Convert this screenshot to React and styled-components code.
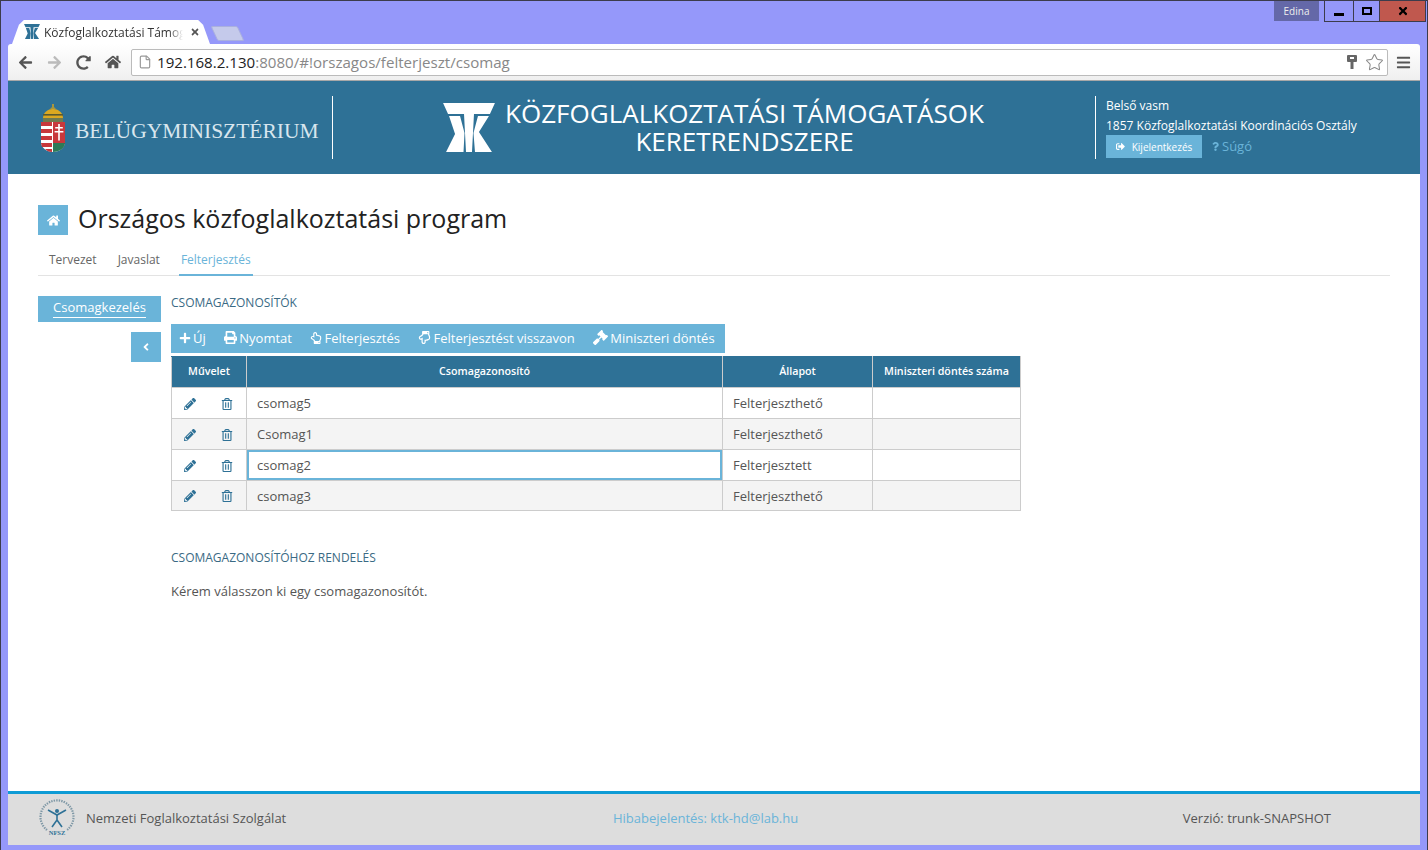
import React from 'react';
import styled, { createGlobalStyle } from 'styled-components';
import {
  FaArrowLeft, FaArrowRight, FaBars, FaGavel, FaHome, FaPencilAlt, FaPlus, FaPrint, FaQuestion,
  FaRedoAlt, FaRegHandPointDown, FaRegHandPointUp, FaRegTrashAlt, FaSignOutAlt, FaAngleLeft, FaTimes,
} from 'react-icons/fa';
import { File, Star } from 'lucide-react';

const GlobalStyle = createGlobalStyle`
  html, body { margin: 0; padding: 0; }
  body { font-family: "Open Sans", "Noto Sans", sans-serif; color: #555; overflow: hidden; }
  * { box-sizing: border-box; }
`;

const TkLogo = ({ size = 50, color = '#fff' }) => (
  <svg width={size} height={size * 0.94} viewBox="0 0 52 49" fill={color}>
    <polygon points="0,0 52,0 47,11 31,11 29,49 23,49 21,11 5,11" />
    <polygon points="6,13 17,13 21.5,30 20.5,49 3,49 12,31" />
    <polygon points="35,13 46,13 36,29 49,49 32,49 30.5,30" />
  </svg>
);

const CoatOfArms = () => (
  <svg width="24" height="48" viewBox="0 0 24 48">
    <path d="M11 0 L13 0 L13 3 L15 5 L12 6 L9 5 L11 3 Z" fill="#a8963c" />
    <path d="M2 17 C1 8 7 5 12 5 C17 5 23 8 22 17 Z" fill="#dba820" />
    <rect x="2" y="10" width="20" height="1.6" fill="#5a5a30" />
    <rect x="2" y="14" width="20" height="4" fill="#6f7a50" />
    <path d="M0 18 H24 V38 C24 44 18 48 12 48 C6 48 0 44 0 38 Z" fill="#fff" />
    <path d="M0 18 H11 V22 H0 Z M0 25 H11 V29 H0 Z M0 32 H11 V36 H0 Z M0 39 H11 V43 H1 Z M4 45 H11 V48 C8 48 6 47 4 45 Z" fill="#c8383c" />
    <path d="M12 18 H24 V40 H12 Z" fill="#c8383c" />
    <path d="M17.2 20 h1.6 v3 h3 v1.5 h-3 v2.5 h3.6 v1.5 h-3.6 v8 h-1.6 v-8 h-3.6 v-1.5 h3.6 v-2.5 h-3 v-1.5 h3 Z" fill="#fff" />
    <path d="M12 39 H24 C24 44 18 48 12 48 Z" fill="#2d7a57" />
  </svg>
);

const NfszLogo = () => (
  <svg width="38" height="38" viewBox="0 0 38 38">
    <path d="M9 31 A16.5 16.5 0 1 1 29 31" fill="none" stroke="#7f98a6" strokeWidth="2.2" strokeDasharray="1.4 1.1" />
    <g stroke="#2e7196" fill="none" strokeWidth="1.6">
      <path d="M10 11 L19 16 L28 11" />
      <path d="M19 15 V21 L14 28 M19 21 L24 28" />
    </g>
    <circle cx="19" cy="12" r="2" fill="#2e7196" />
    <text x="19" y="36" textAnchor="middle" fontSize="6.5" fontWeight="700" fontFamily='"Liberation Serif", serif' fill="#2e7196">NFSZ</text>
  </svg>
);

const KeyIcon = () => (
  <svg width="10" height="15" viewBox="0 0 10 15" fill="#666">
    <rect x="0" y="0" width="10" height="7" rx="1" />
    <rect x="3.5" y="6" width="3" height="8" />
    <rect x="3" y="2" width="4" height="2" fill="#fff" />
  </svg>
);

const Window = styled.div`
  width: 1428px;
  height: 850px;
  display: flex;
  flex-direction: column;
  background: #9598fa;
  border-top: 1px solid #3c3c4c;
  border-left: 1px solid #3c3c4c;
  border-right: 1px solid #3c3c4c;
  padding: 0 7px 5px;
`;

const TitleBar = styled.div`
  height: 43px;
  flex: none;
  display: flex;
  align-items: flex-end;
  padding-left: 4px;
  position: relative;
`;

const ActiveTab = styled.div`
  width: 198px;
  height: 24px;
  flex: none;
  background: #fff;
  display: flex;
  align-items: center;
  padding: 0 6px 0 12px;
  gap: 4px;
  clip-path: polygon(0 100%, 3.5% 20%, 6% 0, 94% 0, 96.5% 20%, 100% 100%);
`;

const TabTitle = styled.span`
  font-size: 12px;
  color: #333;
  white-space: nowrap;
  overflow: hidden;
  width: 139px;
  flex: none;
  -webkit-mask-image: linear-gradient(to right, #000 90%, transparent);
  mask-image: linear-gradient(to right, #000 90%, transparent);
`;

const TabClose = styled.span`
  display: flex;
  color: #555;
  font-size: 10px;
  margin-left: 3px;
`;

const NewTab = styled.div`
  width: 27px;
  height: 15px;
  margin: 0 0 3px 4px;
  background: #c5caeb;
  border: 1px solid #aab0de;
  border-radius: 2px;
  transform: skewX(25deg);
`;

const WindowControls = styled.div`
  position: absolute;
  top: 0;
  right: -6px;
  display: flex;
  align-items: flex-start;
  gap: 5px;
`;

const UserBadge = styled.div`
  width: 45px;
  height: 20px;
  background: #6468a8;
  color: #eee;
  font-size: 10px;
  line-height: 20px;
  text-align: center;
`;

const ControlGroup = styled.div`
  display: flex;
  height: 21px;
  border: 1px solid #3c3c4c;
  border-top: 0;
`;

const ControlButton = styled.div`
  width: ${(p) => p.$width}px;
  display: flex;
  align-items: center;
  justify-content: center;
  color: #000;
  background: ${(p) => (p.$close ? '#c0584e' : 'transparent')};
  border-left: ${(p) => (p.$first ? '0' : '1px solid #3c3c4c')};
`;

const MinGlyph = styled.span`
  width: 10px;
  height: 3px;
  background: #000;
  margin-top: 6px;
`;

const MaxGlyph = styled.span`
  width: 10px;
  height: 8px;
  border: 2px solid #000;
`;

const Toolbar = styled.div`
  height: 37px;
  flex: none;
  background: linear-gradient(#fff, #efefef);
  border-radius: 3px 3px 0 0;
  border-bottom: 1px solid #a8a8a8;
  display: flex;
  align-items: center;
  padding: 0 8px 0 10px;
`;

const NavButton = styled.span`
  width: ${(p) => p.$width || 29}px;
  display: flex;
  color: ${(p) => p.$color || '#555'};
  font-size: 15px;
`;

const UrlBar = styled.div`
  width: 1257px;
  height: 27px;
  border: 1px solid #bbb;
  border-radius: 2px;
  background: #fff;
  display: flex;
  align-items: center;
  padding: 0 3px 0 6px;
`;

const UrlText = styled.span`
  margin-left: 5px;
  font-size: 15.1px;
  color: #888;
  flex: 1;
  white-space: nowrap;
`;

const UrlHost = styled.span`
  color: #222;
`;

const UrlIcons = styled.span`
  display: flex;
  align-items: center;
  gap: 8px;
`;

const MenuButton = styled.span`
  display: flex;
  margin-left: 8px;
  color: #555;
  font-size: 15px;
`;

const Page = styled.div`
  flex: 1;
  display: flex;
  flex-direction: column;
  background: #fff;
`;

const Header = styled.header`
  height: 93px;
  flex: none;
  background: #2e7196;
  display: flex;
  align-items: center;
  color: #fff;
`;

const Ministry = styled.div`
  width: 325px;
  height: 63px;
  flex: none;
  display: flex;
  align-items: center;
  gap: 10px;
  padding-left: 33px;
  border-right: 1px solid #fff;
`;

const MinistryName = styled.span`
  font-family: "Liberation Serif", serif;
  font-size: 21.5px;
  color: #d8e6ee;
  white-space: nowrap;
  padding-top: 8px;
`;

const Brand = styled.div`
  flex: 1;
  display: flex;
  align-items: center;
  justify-content: center;
  gap: 10px;
  padding-right: 1px;
`;

const BrandTitle = styled.div`
  font-size: 26px;
  line-height: 28px;
  text-align: center;
  white-space: nowrap;
  margin-top: -2px;
`;

const UserBox = styled.div`
  width: 325px;
  height: 63px;
  flex: none;
  border-left: 1px solid #fff;
  padding-left: 10px;
  font-size: 12px;
  display: flex;
  flex-direction: column;
`;

const UserLine = styled.div`
  height: 20px;
  line-height: 19px;
  white-space: nowrap;
`;

const UserActions = styled.div`
  display: flex;
  align-items: center;
  gap: 9px;
  margin-top: -1px;
`;

const LogoutButton = styled.span`
  width: 96px;
  height: 23px;
  background: #6ab4d9;
  display: flex;
  align-items: center;
  justify-content: center;
  gap: 7px;
  font-size: 10px;
`;

const HelpLink = styled.span`
  display: flex;
  align-items: center;
  gap: 2px;
  font-size: 13px;
  color: #6ab4d9;
  margin-top: -1px;
`;

const Content = styled.main`
  flex: 1;
  padding: 31px 30px 0;
`;

const TitleRow = styled.div`
  display: flex;
  align-items: center;
  gap: 10px;
`;

const TitleIcon = styled.span`
  width: 30px;
  height: 30px;
  background: #6ab4d9;
  color: #fff;
  font-size: 13px;
  display: flex;
  align-items: center;
  justify-content: center;
`;

const PageTitle = styled.h1`
  margin: 0;
  font-size: 25px;
  font-weight: 400;
  line-height: 26px;
  padding-bottom: 4px;
  color: #222;
`;

const Tabs = styled.nav`
  margin-top: 10px;
  height: 31px;
  border-bottom: 1px solid #e3e3e3;
  display: flex;
  gap: 17px;
  padding-left: 9px;
`;

const TabLink = styled.span`
  height: 31px;
  font-size: 12px;
  line-height: 29px;
  padding: 0 2px;
  color: ${(p) => (p.$active ? '#6ab4d9' : '#666')};
  border-bottom: ${(p) => (p.$active ? '2px solid #6ab4d9' : '0')};
`;

const Body = styled.div`
  margin-top: 20px;
  display: flex;
  gap: 10px;
`;

const Side = styled.aside`
  width: 123px;
  flex: none;
  display: flex;
  flex-direction: column;
  align-items: flex-end;
  gap: 10px;
`;

const SideItem = styled.div`
  width: 100%;
  height: 26px;
  background: #6ab4d9;
  color: #fff;
  font-size: 13px;
  line-height: 22px;
  text-align: center;
`;

const SideLabel = styled.span`
  border-bottom: 1px solid #fff;
  padding-bottom: 1px;
`;

const CollapseButton = styled.span`
  width: 30px;
  height: 30px;
  background: #6ab4d9;
  color: #fff;
  font-size: 12px;
  display: flex;
  align-items: center;
  justify-content: center;
`;

const Main = styled.section`
  flex: 1;
`;

const SectionTitle = styled.h2`
  margin: 0;
  font-size: 12px;
  font-weight: 400;
  line-height: 14px;
  color: #3a6a84;
  text-transform: uppercase;
`;

const ActionBar = styled.div`
  margin-top: 14px;
  width: 554px;
  height: 29px;
  background: #6ab4d9;
  display: flex;
  align-items: center;
  padding: 0 0 2px 8px;
  gap: 18.5px;
  color: #fff;
  font-size: 13px;
`;

const ActionItem = styled.span`
  display: flex;
  align-items: center;
  gap: 2px;
  white-space: nowrap;
`;

const Table = styled.table`
  margin-top: 3px;
  width: 849px;
  table-layout: fixed;
  border-collapse: collapse;
  font-size: 13px;
`;

const HeadCell = styled.th`
  height: 31px;
  padding: 0 0 3px;
  background: #2e7196;
  border: 1px solid #ccc;
  border-top-color: #2e7196;
  color: #fff;
  font-size: 10.7px;
  font-weight: 600;
`;

const Row = styled.tr`
  background: ${(p) => (p.$odd ? '#f4f4f4' : '#fff')};
`;

const Cell = styled.td`
  height: ${(p) => (p.$last ? 30 : 31)}px;
  padding: 0 10px;
  border: 1px solid #ccc;
  color: #555;
  box-shadow: ${(p) => (p.$selected ? 'inset 0 0 0 2px #6ab4d9' : 'none')};
`;

const ActionCell = styled.div`
  display: flex;
  align-items: center;
  justify-content: space-between;
  padding: 1px 3px 0 2px;
  color: #2e7196;
  font-size: 12px;
`;

const AssignSection = styled.div`
  margin-top: 40px;
`;

const Hint = styled.p`
  margin: 18px 0 0;
  font-size: 13px;
  line-height: 17px;
  color: #555;
`;

const Footer = styled.footer`
  height: 54px;
  flex: none;
  background: #ddd;
  border-top: 3px solid #0e9bd5;
  display: flex;
  align-items: center;
  padding: 0 89px 4px 30px;
  font-size: 13px;
  color: #555;
`;

const FooterLeft = styled.div`
  width: 575px;
  display: flex;
  align-items: center;
  gap: 10px;
`;

const FooterLink = styled.span`
  color: #6ab4d9;
`;

const FooterRight = styled.span`
  margin-left: auto;
`;

const rows = [
  { id: 'csomag5', status: 'Felterjeszthető' },
  { id: 'Csomag1', status: 'Felterjeszthető' },
  { id: 'csomag2', status: 'Felterjesztett', selected: true },
  { id: 'csomag3', status: 'Felterjeszthető', last: true },
];

const actions = [
  { icon: <FaPlus size={12} />, label: 'Új' },
  { icon: <FaPrint size={13} />, label: 'Nyomtat' },
  { icon: <FaRegHandPointUp size={12} />, label: 'Felterjesztés' },
  { icon: <FaRegHandPointDown size={13} />, label: 'Felterjesztést visszavon' },
  { icon: <FaGavel size={15} />, label: 'Miniszteri döntés' },
];

const App = () => (
  <Window>
    <GlobalStyle />
    <TitleBar>
      <ActiveTab>
        <TkLogo size={16} color="#2e7196" />
        <TabTitle>Közfoglalkoztatási Támogatások</TabTitle>
        <TabClose><FaTimes /></TabClose>
      </ActiveTab>
      <NewTab />
      <WindowControls>
        <UserBadge>Edina</UserBadge>
        <ControlGroup>
          <ControlButton $width={28} $first><MinGlyph /></ControlButton>
          <ControlButton $width={26}><MaxGlyph /></ControlButton>
          <ControlButton $width={46} $close><FaTimes size={12} /></ControlButton>
        </ControlGroup>
      </WindowControls>
    </TitleBar>
    <Toolbar>
      <NavButton><FaArrowLeft /></NavButton>
      <NavButton $color="#bbb"><FaArrowRight /></NavButton>
      <NavButton><FaRedoAlt /></NavButton>
      <NavButton $width={26}><FaHome size={16} /></NavButton>
      <UrlBar>
        <File size={14} color="#999" />
        <UrlText><UrlHost>192.168.2.130</UrlHost>:8080/#!orszagos/felterjeszt/csomag</UrlText>
        <UrlIcons>
          <KeyIcon />
          <Star size={19} color="#888" strokeWidth={1.3} />
        </UrlIcons>
      </UrlBar>
      <MenuButton><FaBars /></MenuButton>
    </Toolbar>
    <Page>
      <Header>
        <Ministry>
          <CoatOfArms />
          <MinistryName>BELÜGYMINISZTÉRIUM</MinistryName>
        </Ministry>
        <Brand>
          <TkLogo size={52} />
          <BrandTitle>KÖZFOGLALKOZTATÁSI TÁMOGATÁSOK<br />KERETRENDSZERE</BrandTitle>
        </Brand>
        <UserBox>
          <UserLine>Belső vasm</UserLine>
          <UserLine>1857 Közfoglalkoztatási Koordinációs Osztály</UserLine>
          <UserActions>
            <LogoutButton><FaSignOutAlt size={9} />Kijelentkezés</LogoutButton>
            <HelpLink><FaQuestion size={9} />Súgó</HelpLink>
          </UserActions>
        </UserBox>
      </Header>
      <Content>
        <TitleRow>
          <TitleIcon><FaHome /></TitleIcon>
          <PageTitle>Országos közfoglalkoztatási program</PageTitle>
        </TitleRow>
        <Tabs>
          <TabLink>Tervezet</TabLink>
          <TabLink>Javaslat</TabLink>
          <TabLink $active>Felterjesztés</TabLink>
        </Tabs>
        <Body>
          <Side>
            <SideItem><SideLabel>Csomagkezelés</SideLabel></SideItem>
            <CollapseButton><FaAngleLeft /></CollapseButton>
          </Side>
          <Main>
            <SectionTitle>Csomagazonosítók</SectionTitle>
            <ActionBar>
              {actions.map((a) => (
                <ActionItem key={a.label}>{a.icon}{a.label}</ActionItem>
              ))}
            </ActionBar>
            <Table>
              <colgroup>
                <col width="75" />
                <col width="476" />
                <col width="150" />
                <col width="148" />
              </colgroup>
              <thead>
                <tr>
                  <HeadCell>Művelet</HeadCell>
                  <HeadCell>Csomagazonosító</HeadCell>
                  <HeadCell>Állapot</HeadCell>
                  <HeadCell>Miniszteri döntés száma</HeadCell>
                </tr>
              </thead>
              <tbody>
                {rows.map((r, i) => (
                  <Row key={r.id} $odd={i % 2 === 1}>
                    <Cell $last={r.last}>
                      <ActionCell><FaPencilAlt /><FaRegTrashAlt /></ActionCell>
                    </Cell>
                    <Cell $last={r.last} $selected={r.selected}>{r.id}</Cell>
                    <Cell $last={r.last}>{r.status}</Cell>
                    <Cell $last={r.last} />
                  </Row>
                ))}
              </tbody>
            </Table>
            <AssignSection>
              <SectionTitle>Csomagazonosítóhoz rendelés</SectionTitle>
              <Hint>Kérem válasszon ki egy csomagazonosítót.</Hint>
            </AssignSection>
          </Main>
        </Body>
      </Content>
      <Footer>
        <FooterLeft>
          <NfszLogo />
          Nemzeti Foglalkoztatási Szolgálat
        </FooterLeft>
        <FooterLink>Hibabejelentés: ktk-hd@lab.hu</FooterLink>
        <FooterRight>Verzió: trunk-SNAPSHOT</FooterRight>
      </Footer>
    </Page>
  </Window>
);

export default App;
